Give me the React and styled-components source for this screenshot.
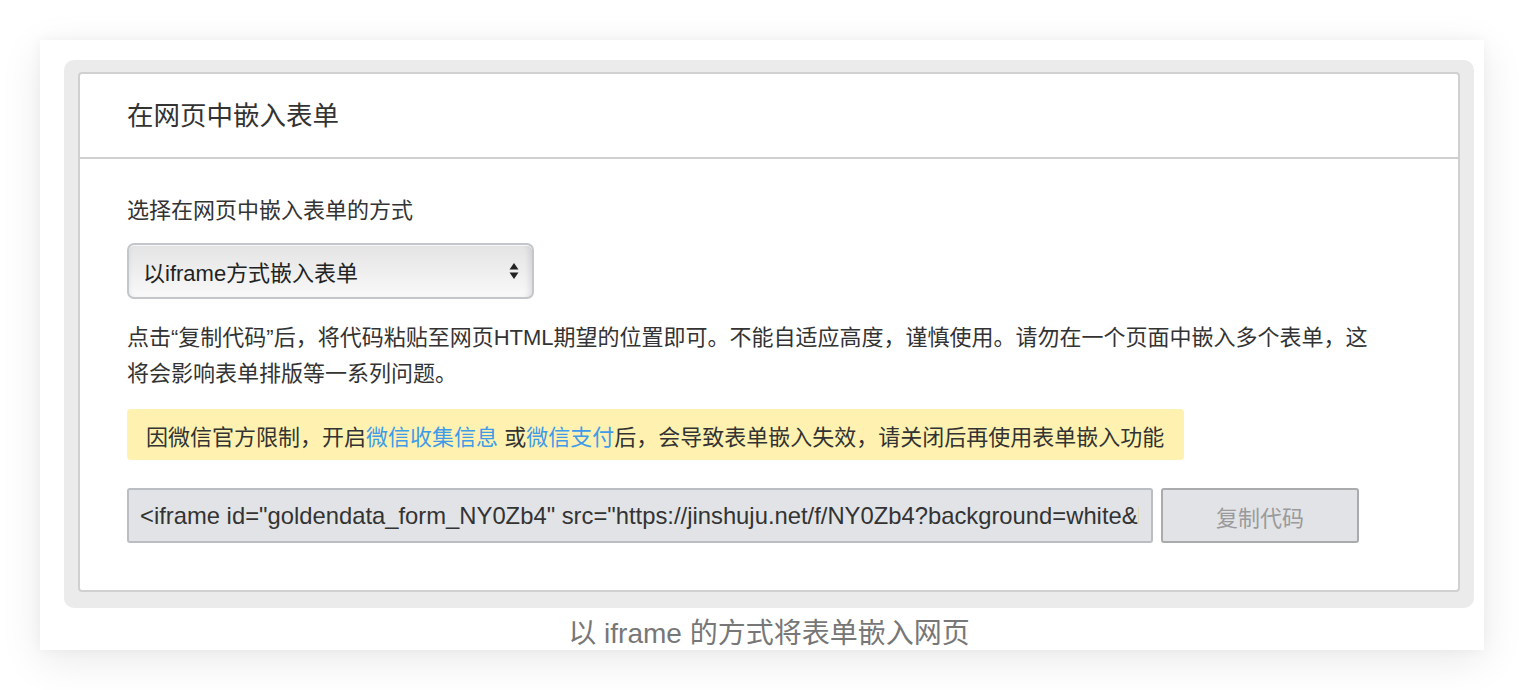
import React from 'react';
import styled, { createGlobalStyle } from 'styled-components';

const fontStack = `"Liberation Sans", "Noto Sans CJK SC", sans-serif`;

const GlobalStyle = createGlobalStyle`
  html, body {
    margin: 0;
    padding: 0;
    background: #ffffff;
  }
  body {
    font-family: ${fontStack};
    color: #333333;
  }
`;

const Page = styled.div`
  padding: 40px;
  width: 1524px;
  box-sizing: border-box;
`;

const Card = styled.div`
  width: 1444px;
  height: 610px;
  box-sizing: border-box;
  padding: 20px 10px 0 24px;
  background: #ffffff;
  box-shadow: 0 10px 40px rgba(0, 0, 0, 0.09), 0 0 12px rgba(0, 0, 0, 0.04);
  display: flex;
  flex-direction: column;
`;

const Panel = styled.div`
  background: #ebebeb;
  border-radius: 10px;
  padding: 12px 14px 16px 14px;
`;

const Box = styled.div`
  background: #ffffff;
  border: 2px solid #d0d0d0;
  border-radius: 4px;
`;

const Header = styled.div`
  height: 83px;
  display: flex;
  align-items: center;
  padding-left: 47px;
  border-bottom: 2px solid #d0d0d0;
`;

const Title = styled.h2`
  margin: 0;
  font-size: 26.5px;
  font-weight: 400;
  line-height: 32px;
  color: #333333;
`;

const Body = styled.div`
  padding: 36px 47px 47px 47px;
`;

const Label = styled.div`
  font-size: 22px;
  line-height: 32px;
  color: #333333;
`;

const SelectBox = styled.div`
  margin-top: 16px;
  width: 407px;
  height: 56px;
  box-sizing: border-box;
  border: 2px solid #c3c7cb;
  border-radius: 7px;
  background: linear-gradient(#e4e4e4 0%, #ededed 45%, #f9f9f9 100%);
  box-shadow: inset 0 1px 0 #f6f6f6, inset -6px 0 6px -4px rgba(0, 0, 0, 0.12), inset 4px 0 5px -4px rgba(0, 0, 0, 0.08);
  display: flex;
  align-items: center;
  justify-content: space-between;
  padding: 0 13px 0 14px;
  font-size: 22px;
  color: #222222;
`;

const Arrows = styled.svg`
  width: 10px;
  height: 20px;
`;

const Paragraph = styled.p`
  margin: 21px 0 0 0;
  max-width: 1242px;
  font-size: 22px;
  line-height: 36px;
  color: #333333;
`;

const Notice = styled.div`
  margin-top: 17px;
  display: inline-flex;
  align-items: center;
  height: 51px;
  box-sizing: border-box;
  padding: 0 20px 0 19px;
  background: #fff2b0;
  border-radius: 4px;
  font-size: 22px;
  color: #333333;
  white-space: nowrap;
`;

const Link = styled.a`
  color: #3d9be9;
  text-decoration: none;
`;

const CodeRow = styled.div`
  margin-top: 28px;
  display: flex;
  gap: 8px;
`;

const CodeInput = styled.input`
  width: 1026px;
  height: 55px;
  box-sizing: border-box;
  padding: 0 12px 0 11px;
  border: 2px solid #babdc1;
  border-radius: 3px;
  background: #e1e3e7;
  font-family: ${fontStack};
  font-size: 23.8px;
  color: #333333;
  outline: none;
`;

const CopyButton = styled.button`
  width: 198px;
  height: 55px;
  box-sizing: border-box;
  border: 2px solid #a9abad;
  border-radius: 3px;
  background: #e1e3e7;
  font-family: ${fontStack};
  font-size: 22px;
  color: #9a9a9a;
  cursor: default;
`;

const Caption = styled.div`
  text-align: center;
  font-size: 28px;
  line-height: 52px;
  color: #777777;
`;

const embedCode =
  '<iframe id="goldendata_form_NY0Zb4" src="https://jinshuju.net/f/NY0Zb4?background=white&banner=show&embedded=true" width="640" frameborder=0 style="border:none;box-sizing:border-box" height="1293"></iframe>';

export default function App() {
  return (
    <Page>
      <GlobalStyle />
      <Card>
        <Panel>
          <Box>
            <Header>
              <Title>在网页中嵌入表单</Title>
            </Header>
            <Body>
              <Label>选择在网页中嵌入表单的方式</Label>
              <SelectBox>
                <span>以iframe方式嵌入表单</span>
                <Arrows viewBox="0 0 10 20">
                  <path d="M5 2 L9.5 8.5 H0.5 Z" fill="#222" />
                  <path d="M5 18 L9.5 11.5 H0.5 Z" fill="#222" />
                </Arrows>
              </SelectBox>
              <Paragraph>
                点击“复制代码”后，将代码粘贴至网页HTML期望的位置即可。不能自适应高度，谨慎使用。请勿在一个页面中嵌入多个表单，这将会影响表单排版等一系列问题。
              </Paragraph>
              <Notice>
                因微信官方限制，开启<Link>微信收集信息</Link>&nbsp;或<Link>微信支付</Link>后，会导致表单嵌入失效，请关闭后再使用表单嵌入功能
              </Notice>
              <CodeRow>
                <CodeInput readOnly value={embedCode} />
                <CopyButton>复制代码</CopyButton>
              </CodeRow>
            </Body>
          </Box>
        </Panel>
        <Caption>以 iframe 的方式将表单嵌入网页</Caption>
      </Card>
    </Page>
  );
}
